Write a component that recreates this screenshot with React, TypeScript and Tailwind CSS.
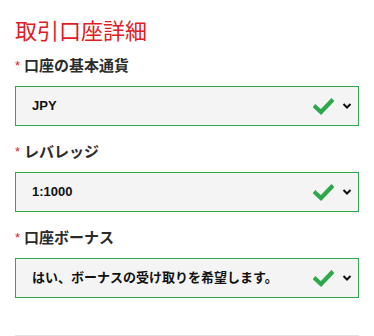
import React from 'react'

const font = { fontFamily: '"Liberation Sans", "Noto Sans CJK JP", sans-serif' }

function Check() {
  return (
    <svg width="21" height="17" viewBox="0 0 21 17" className="shrink-0">
      <path d="M2.5 9 L8 14 L18.5 3" fill="none" stroke="#2ea84a" strokeWidth="4.2" strokeLinecap="square" strokeLinejoin="miter" />
    </svg>
  )
}

function Chevron() {
  return (
    <svg width="10" height="8" viewBox="0 0 10 8" className="shrink-0">
      <path d="M1.5 2 L5 5.5 L8.5 2" fill="none" stroke="#111" strokeWidth="2" />
    </svg>
  )
}

function Field({ label, value }: { label: string; value: string }) {
  return (
    <div className="flex flex-col">
      <div className="flex items-center h-[20px] text-[15px] font-bold text-[#2b2b2b]">
        <span className="text-[#e31b23] text-[13px] mr-[4px] font-normal">*</span>
        {label}
      </div>
      <div className="mt-[10px] h-[40px] flex items-center border border-[#2fa84f] bg-[#f4f4f4] pl-[16px] pr-[6px]">
        <span className="flex-1 text-[13px] font-bold text-[#111]">{value}</span>
        <Check />
        <span className="w-[8px]" />
        <Chevron />
      </div>
    </div>
  )
}

export default function App() {
  return (
    <div className="w-[374px] h-[336px] bg-white overflow-hidden" style={font}>
      <div className="px-[15px] pt-[19px]">
        <h1 className="text-[22px] leading-[26px] text-[#e31b23] font-normal">取引口座詳細</h1>
        <div className="mt-[11px] flex flex-col gap-[16px]">
          <Field label="口座の基本通貨" value="JPY" />
          <Field label="レバレッジ" value="1:1000" />
          <Field label="口座ボーナス" value="はい、ボーナスの受け取りを希望します。" />
        </div>
        <div className="mt-[37px] border-t border-[#e2e2e2]" />
      </div>
    </div>
  )
}
